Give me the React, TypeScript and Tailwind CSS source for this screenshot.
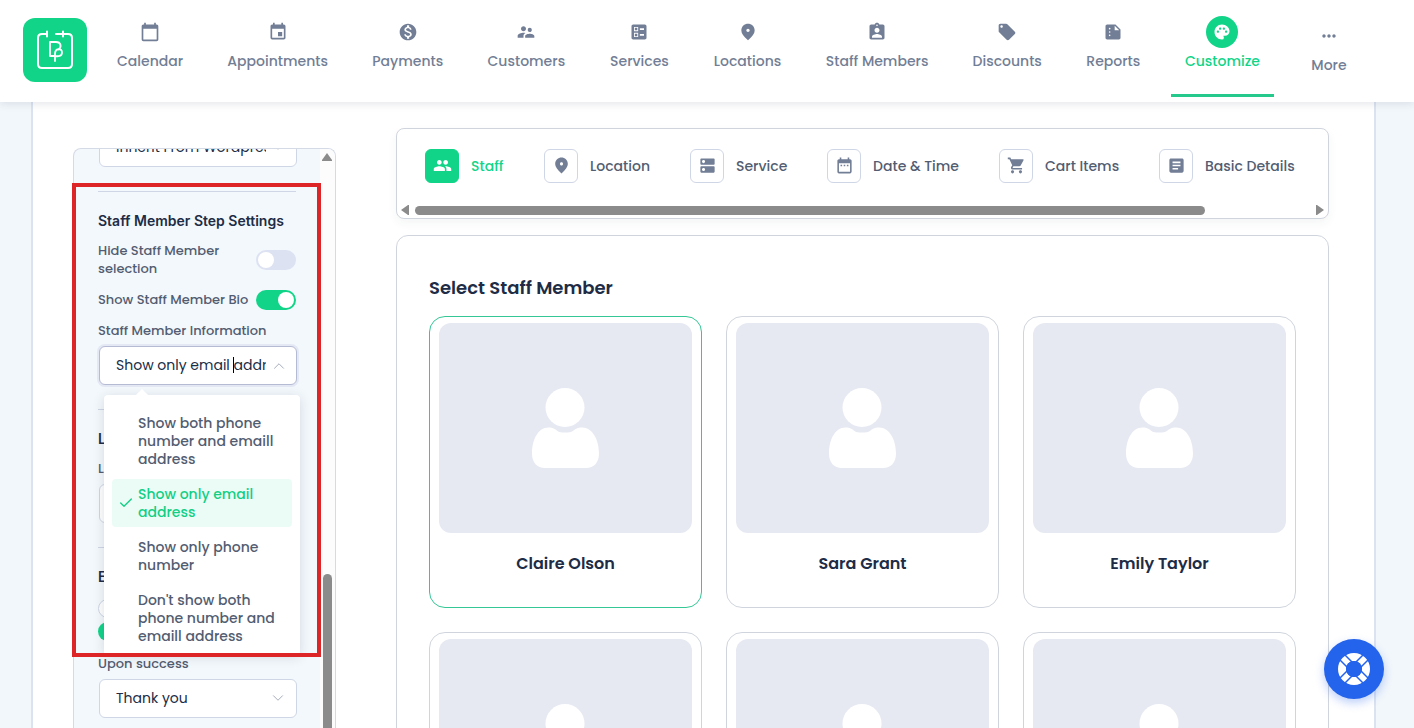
import type { ReactNode } from "react";
import type { IconType } from "react-icons";
import {
  MdArticle,
  MdAssignmentInd,
  MdBallot,
  MdCalendarToday,
  MdDateRange,
  MdDns,
  MdEvent,
  MdFmdGood,
  MdLocalOffer,
  MdMonetizationOn,
  MdMoreHoriz,
  MdPalette,
  MdPeople,
  MdShoppingCart,
  MdSummarize,
  MdSupervisorAccount,
} from "react-icons/md";
import { Check, ChevronDown, ChevronUp } from "lucide-react";

const NAV: { label: string; icon: IconType }[] = [
  { label: "Calendar", icon: MdCalendarToday },
  { label: "Appointments", icon: MdEvent },
  { label: "Payments", icon: MdMonetizationOn },
  { label: "Customers", icon: MdSupervisorAccount },
  { label: "Services", icon: MdBallot },
  { label: "Locations", icon: MdFmdGood },
  { label: "Staff Members", icon: MdAssignmentInd },
  { label: "Discounts", icon: MdLocalOffer },
  { label: "Reports", icon: MdSummarize },
  { label: "Customize", icon: MdPalette },
];

const STEPS: { label: string; icon: IconType }[] = [
  { label: "Staff", icon: MdPeople },
  { label: "Location", icon: MdFmdGood },
  { label: "Service", icon: MdDns },
  { label: "Date & Time", icon: MdDateRange },
  { label: "Cart Items", icon: MdShoppingCart },
  { label: "Basic Details", icon: MdArticle },
];

const INFO_OPTIONS = [
  "Show both phone number and emaill address",
  "Show only email address",
  "Show only phone number",
  "Don't show both phone number and emaill address",
];

const STAFF = ["Claire Olson", "Sara Grant", "Emily Taylor", "", "", ""];

function Logo() {
  return (
    <a href="#home" aria-label="Home" className="mb-0.5 block size-16 shrink-0 rounded-xl bg-[#12d488]">
      <svg viewBox="0 0 64 64" className="size-16" fill="none" stroke="white" strokeWidth="2" strokeLinecap="round" strokeLinejoin="round">
        <path d="M24 16H19q-4 0-4 4V46q0 4 4 4H45q4 0 4-4V20q0-4-4-4H33" />
        <path d="M24 13.500v5M40 13.500v5" />
        <path d="M31.500 38H27V24h6c5 0 6 5 2.500 7.500M32 43V36c0-6 7-6.500 7-1.500 0 4-4 4-7 3.500" strokeWidth="1.800" />
      </svg>
    </a>
  );
}

function Header() {
  return (
    <header className="relative z-20 flex h-[102px] shrink-0 items-center bg-white pl-[23px] pr-[38px] shadow-[0_2px_8px_rgba(40,50,80,0.12)]">
      <Logo />
      <nav className="ml-2 grid h-full flex-1 grid-cols-[110fr_145fr_115fr_122fr_104fr_112fr_147fr_113fr_99fr_119fr_94fr] text-sm font-medium text-[#727e95]">
        {NAV.map(({ label, icon: Icon }) => {
          const active = label === "Customize";
          return (
            <a key={label} href={`#${label}`} className={`flex flex-col items-center whitespace-nowrap pt-4 ${active ? "text-[#12d488]" : ""}`}>
              <span className={`flex size-8 items-center justify-center rounded-full ${active ? "bg-[#12d488] text-white" : ""}`}>
                <Icon className={active ? "size-[18px]" : "size-5"} />
              </span>
              <span className={active ? "mt-[3px] h-[46px] border-b-3 border-[#25c98b] px-[14px]" : "mt-[3px]"}>{label}</span>
            </a>
          );
        })}
        <button type="button" className="flex flex-col items-center pt-5">
          <span className="flex size-8 items-center justify-center">
            <MdMoreHoriz className="size-5" />
          </span>
          <span className="mt-[3px]">More</span>
        </button>
      </nav>
    </header>
  );
}

function Toggle({ label, on }: { label: string; on?: boolean }) {
  return (
    <label className="flex items-center justify-between">
      <span className="max-w-[152px]">{label}</span>
      <input
        type="checkbox"
        role="switch"
        defaultChecked={on}
        className="relative h-5 w-10 shrink-0 appearance-none rounded-full bg-[#dde2f3] before:absolute before:top-0.5 before:left-0.5 before:size-4 before:rounded-full before:bg-white checked:bg-[#12d488] checked:before:left-[22px]"
      />
    </label>
  );
}

function Select({ label, value }: { label: string; value: string }) {
  return (
    <div className="relative ml-px w-[198px]">
      <select aria-label={label} className="h-[39px] w-full appearance-none rounded-md border border-[#cfd6e5] bg-white pr-[30px] pb-0.5 pl-4 text-sm font-normal text-[#202c45]">
        <option>{value}</option>
      </select>
      <ChevronDown className="pointer-events-none absolute top-[10px] right-[10px] size-[18px] text-[#a4abb9]" strokeWidth={1.3} />
    </div>
  );
}

function InfoSelect() {
  return (
    <div className="relative ml-px w-[198px]">
      <div className="flex h-[39px] items-center gap-1 rounded-md border border-[#b5bbd3] bg-white pr-2 pl-4 shadow-[0_0_0_2px_#e4e8f4]">
        <input id="info" role="combobox" aria-expanded="true" aria-controls="info-list" defaultValue="Show only email address" className="w-[150px] pb-0.5 text-sm font-normal text-[#202c45] outline-none" />
        <ChevronUp className="size-[18px] shrink-0 text-[#a4abb9]" strokeWidth={1.3} />
      </div>
      <span className="absolute top-[11px] left-[134px] h-4 w-px bg-black" />
      <div className="absolute top-[49px] left-[5px] z-10 w-[196px] rounded-sm bg-white px-2 pt-[13px] pb-1 shadow-[0_2px_12px_rgba(30,40,70,0.15)]">
        <span className="absolute -top-1 left-[33px] size-[10px] rotate-45 bg-white" />
        <ul id="info-list" role="listbox" aria-label="Staff Member Information" className="flex flex-col gap-[5px] text-sm leading-[18px] font-medium text-[#535d71]">
          {INFO_OPTIONS.map((option, i) => (
            <li
              key={option}
              role="option"
              aria-selected={i === 1}
              className={`flex items-center rounded-sm py-[6px] pr-2 ${i === 1 ? "bg-[#ebfcf6] text-[#12cf85]" : ""}`}
            >
              <span className="flex w-[26px] shrink-0 justify-center pl-0.5">{i === 1 && <Check className="size-4" strokeWidth={2} />}</span>
              <span>{option}</span>
            </li>
          ))}
        </ul>
      </div>
    </div>
  );
}

function SectionTitle({ children }: { children: ReactNode }) {
  return <h2 className="font-['Inter',sans-serif] text-sm leading-5 font-semibold text-[#202c45]">{children}</h2>;
}

function Settings() {
  return (
    <aside className="relative w-[263px] shrink-0">
      <div className="flex h-full overflow-hidden rounded-t-lg border border-b-0 border-[#d5dae7] bg-[#f3f8fc]">
        <div className="w-[246px] shrink-0 px-6 text-[13px] leading-[18px] font-medium text-[#535d71]">
          <div className="-mt-[21px]">
            <Select label="Font family" value="Inherit From Wordpress" />
          </div>
          <hr className="mt-6 border-[#cfd6e5]" />
          <div className="mt-[19px]">
            <SectionTitle>Staff Member Step Settings</SectionTitle>
          </div>
          <div className="mt-[11px] flex flex-col gap-3">
            <Toggle label="Hide Staff Member selection" />
            <Toggle label="Show Staff Member Bio" on />
          </div>
          <label htmlFor="info" className="mt-3 mb-[6px] block">
            Staff Member Information
          </label>
          <InfoSelect />
          <hr className="mt-6 border-[#cfd6e5]" />
          <div className="mt-[19px]">
            <SectionTitle>L</SectionTitle>
          </div>
          <p className="mt-[11px] mb-[6px]">L</p>
          <Select label="Location" value="" />
          <hr className="mt-6 border-[#cfd6e5]" />
          <div className="mt-[19px]">
            <SectionTitle>E</SectionTitle>
          </div>
          <div className="mt-3 flex flex-col gap-1">
            <input type="radio" name="extra" aria-label="Off" className="size-[19px] appearance-none rounded-full border border-[#cfd6e5] bg-white" />
            <input type="radio" name="extra" aria-label="On" defaultChecked className="size-[19px] appearance-none rounded-full bg-[#12d488]" />
          </div>
          <p className="mt-[14px] mb-[6px]">Upon success</p>
          <Select label="Upon success" value="Thank you" />
        </div>
        <div className="flex flex-1 flex-col items-center bg-[#fcfcfd] pr-px">
          <svg viewBox="0 0 10 8" className="mt-1 h-2 w-[10px]" fill="#8b8b8b">
            <path d="M5 0 10 7v1H0V7z" />
          </svg>
          <span className="mt-[413px] w-[9px] flex-1 rounded-t-full bg-[#8b8b8b]" />
        </div>
      </div>
      {/* highlight frame around the staff step settings */}
      <div className="pointer-events-none absolute top-[35px] -left-px z-10 h-[474px] w-[249px] border-4 border-[#dd2427]" />
    </aside>
  );
}

function StepsBar() {
  return (
    <div className="flex h-[91px] flex-col rounded-lg border border-[#d0d5dd] bg-white shadow-[0_4px_10px_rgba(40,50,80,0.05)]">
      <ol className="mt-5 grid grid-cols-[119fr_146fr_137fr_172fr_160fr_141fr] px-7 text-sm font-medium text-[#535d71]">
        {STEPS.map(({ label, icon: Icon }, i) => (
          <li key={label}>
            <button type="button" className={`flex items-center gap-3 whitespace-nowrap ${i === 0 ? "text-[#12d488]" : ""}`}>
              <span className={`flex size-[34px] items-center justify-center rounded-md border pb-0.5 ${i === 0 ? "border-[#12d488] bg-[#12d488] text-white" : "border-[#cfd6e5] text-[#727e95]"}`}>
                <Icon className="size-[19px]" />
              </span>
              {label}
            </button>
          </li>
        ))}
      </ol>
      <div className="mt-auto mb-[3px] flex items-center gap-[6px] px-1">
        <svg viewBox="0 0 8 10" className="h-[10px] w-2 shrink-0" fill="#8b8b8b">
          <path d="M0 5 7 0h1v10H7z" />
        </svg>
        <div className="h-[9px] flex-1">
          <div className="h-full w-[88.3%] rounded-full bg-[#8b8b8b]" />
        </div>
        <svg viewBox="0 0 8 10" className="h-[10px] w-2 shrink-0" fill="#8b8b8b">
          <path d="M8 5 1 0H0v10h1z" />
        </svg>
      </div>
    </div>
  );
}

function StaffCard({ name, selected }: { name: string; selected: boolean }) {
  return (
    <button type="button" className={`flex h-[292px] flex-col rounded-2xl border bg-white px-[9px] pt-[6px] ${selected ? "border-[#35c795]" : "border-[#d0d5dd]"}`}>
      <span className="flex h-[210px] w-full items-center justify-center rounded-xl bg-[#e6e9f2]">
        <svg viewBox="0 0 68 80" className="h-20 w-[68px]" fill="white">
          <circle cx="33" cy="19.500" r="19.500" />
          <path d="M16.500 39.500c4.500 0 6.500 1.500 9 3.500q2 1.500 7.500 1.500t8-1.500c2.500-2 4.500-3.500 9-3.500 11 0 17 13 17 26 0 9-5 14.500-13 14.500H13C5 80 0 74.500 0 65.500c0-13 5.500-26 16.500-26z" />
        </svg>
      </span>
      <span className="mt-[19px] w-full text-center text-base font-semibold text-[#202c45]">{name}</span>
    </button>
  );
}

export default function App() {
  return (
    <div className="flex h-screen flex-col overflow-hidden bg-[#f2f7fb] font-['Poppins','Inter',sans-serif]">
      <Header />
      <main className="mr-[38px] ml-[31px] flex min-h-0 flex-1 gap-[60px] border-x-2 border-[#dce3f0] bg-white pr-[45px] pl-10">
        <div className="flex pt-[46px]">
          <Settings />
        </div>
        <div className="min-w-0 flex-1 pt-[26px]">
          <StepsBar />
          <section className="mt-4 rounded-xl border border-[#d0d5dd] bg-white px-8 pt-[38px] pb-8">
            <h1 className="text-lg leading-7 font-semibold text-[#202c45]">Select Staff Member</h1>
            <div className="mt-[14px] grid grid-cols-3 gap-6">
              {STAFF.map((name, i) => (
                <StaffCard key={i} name={name} selected={i === 0} />
              ))}
            </div>
          </section>
        </div>
      </main>
      <button type="button" aria-label="Help" className="fixed right-[30px] bottom-[29px] z-30 flex size-[60px] items-center justify-center rounded-full bg-[#2463eb] shadow-[0_4px_10px_rgba(36,99,235,0.3)]">
        <svg viewBox="0 0 32 32" className="size-8" fill="none">
          <circle cx="16" cy="16" r="12" stroke="white" strokeWidth="8" />
          <g stroke="#2463eb" strokeWidth="1.500">
            <path d="M2 7 25 30M7 2 30 25M25 2 2 25M30 7 7 30" />
          </g>
          <circle cx="16" cy="16" r="8" fill="#2463eb" />
        </svg>
      </button>
    </div>
  );
}
